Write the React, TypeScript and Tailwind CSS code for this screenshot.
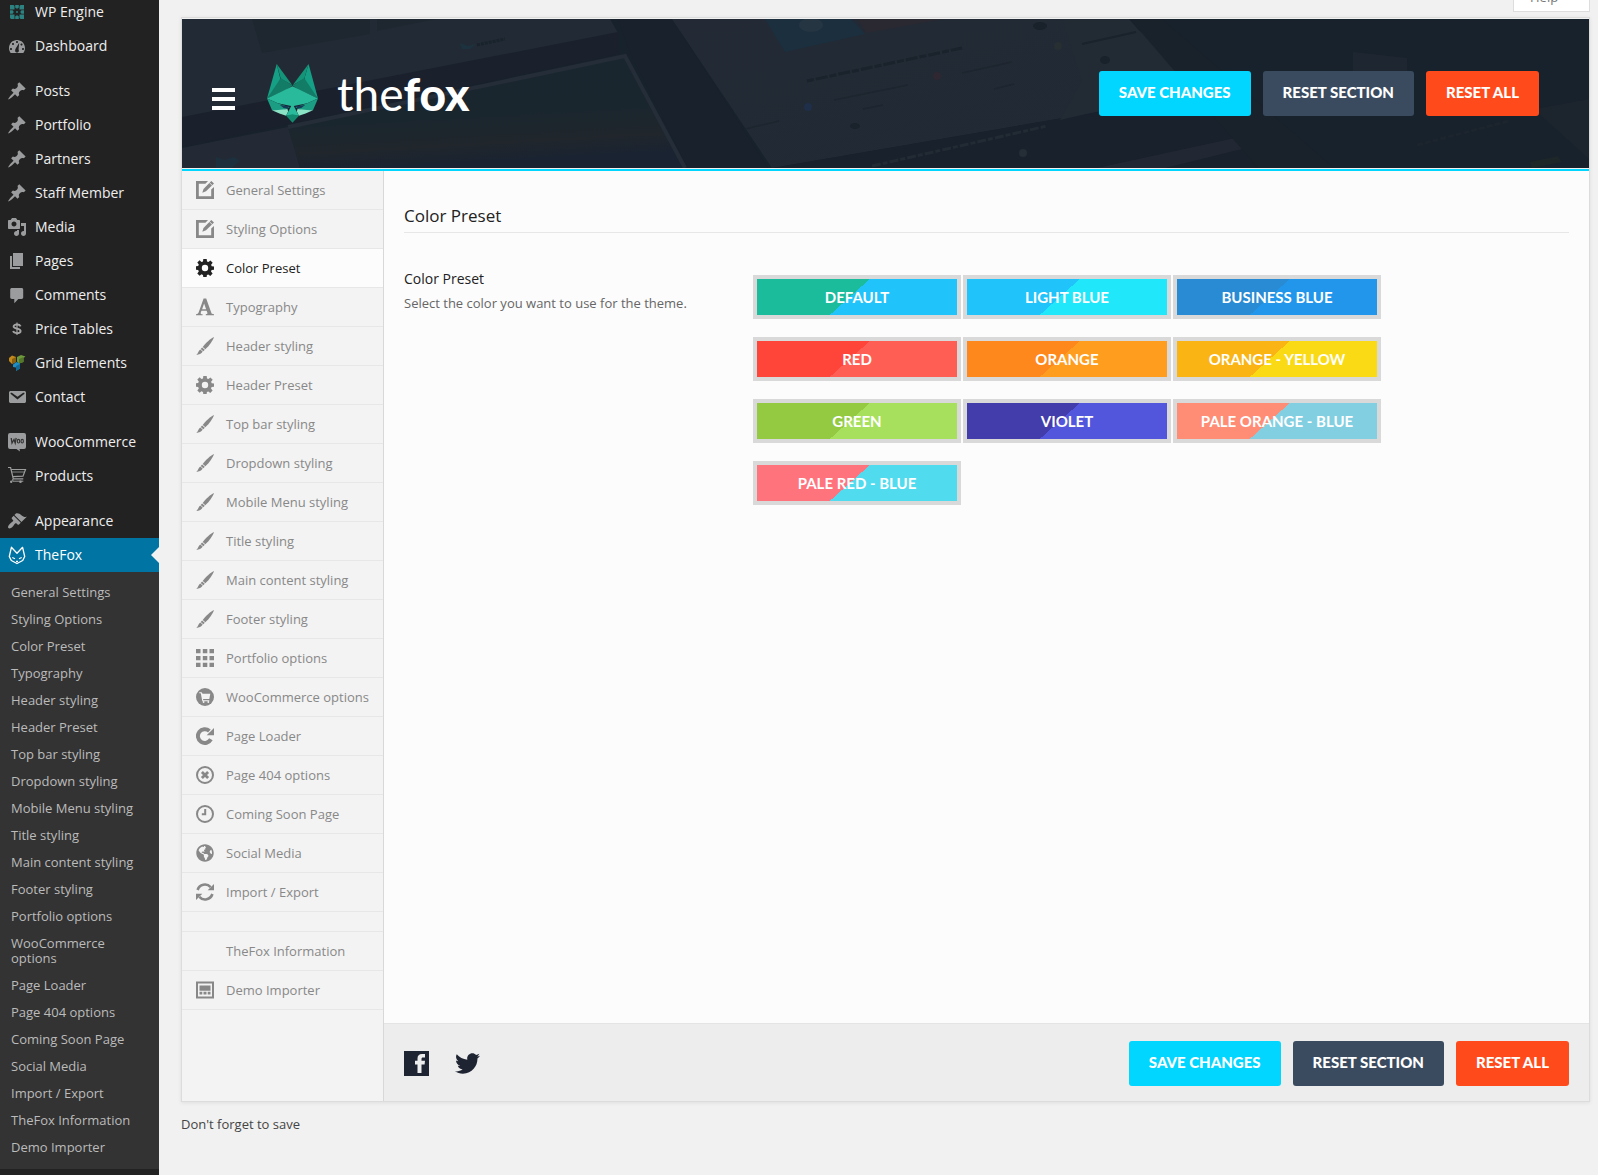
import React from "react";
import { FaGlobeAmericas, FaTwitter } from "react-icons/fa";

type Icon = () => React.ReactElement;

/* ---------- admin sidebar icons (20px grid) ---------- */

const dash = (d: string): Icon => () => (
  <svg viewBox="0 0 20 20" className="size-5 fill-[#9b9c9d]" aria-hidden="true">
    <path d={d} fillRule="evenodd" />
  </svg>
);

const Gauge = dash(
  "M3.76 17h12.48C17.34 15.63 18 13.9 18 12c0-4.41-3.58-8-8-8s-8 3.59-8 8c0 1.9.66 3.63 1.76 5zM9 6c0-.55.45-1 1-1s1 .45 1 1c0 .56-.45 1-1 1s-1-.44-1-1zm-4 2c0-.55.45-1 1-1s1 .45 1 1c0 .56-.45 1-1 1s-1-.44-1-1zM9 12l3.2-5.2L11.6 13c0 .8.3 1 .3 1.700c0 1-.8 1.800-1.900 1.800s-1.900-.8-1.900-1.800c0-1 .4-1.700.9-2.700zM3 13c0-.55.45-1 1-1s1 .45 1 1c0 .56-.45 1-1 1s-1-.44-1-1zM13.500 8.500c0-.55.45-1 1-1s1 .45 1 1c0 .56-.45 1-1 1s-1-.44-1-1zm1.500 4.500c0-.55.45-1 1-1s1 .45 1 1c0 .56-.45 1-1 1s-1-.44-1-1z",
);
const Pin = dash(
  "M10.44 3.02l1.82-1.82 6.36 6.35-1.83 1.82c-1.05-.68-2.48-.57-3.41.36l-.75.75c-.92.93-1.04 2.35-.35 3.41l-1.83 1.82-2.41-2.41-2.8 2.79c-.42.42-3.38 2.71-3.8 2.29s1.86-3.39 2.28-3.81l2.79-2.79L4.1 9.36l1.83-1.82c1.05.69 2.48.57 3.4-.36l.75-.75c.93-.92 1.05-2.35.36-3.41z",
);
const MediaIcon = dash(
  "M13 11V4c0-.55-.45-1-1-1h-1.67L9 1H5L3.67 3H2c-.55 0-1 .45-1 1v7c0 .55.45 1 1 1h10c.55 0 1-.45 1-1zM7 4.5c1.38 0 2.5 1.12 2.5 2.5S8.38 9.5 7 9.500 4.500 8.380 4.500 7 5.620 4.500 7 4.500zM14 6h5v10.500c0 1.380-1.120 2.500-2.500 2.500S14 17.880 14 16.500s1.120-2.500 2.500-2.500c.17 0 .34.02.5.05V9h-3V6zm-4 8.050V13h2v3.500c0 1.380-1.120 2.500-2.500 2.500S7 17.880 7 16.500 8.120 14 9.500 14c.17 0 .34.02.5.05z",
);
const PageIcon = dash("M6 15V2h10v13H6zm-1 1h8v2H3V5h2v11z");
const CommentIcon = dash(
  "M5 3h9.500c1.100 0 1.700.7 1.700 1.700v7.600c0 1-.6 1.700-1.700 1.700h-3.200l-4 4.300V14H5c-1.100 0-1.800-.7-1.800-1.700V4.700C3.200 3.700 3.900 3 5 3z",
);
const MailIcon = dash(
  "M3.87 4h13.250C18.370 4 19 4.590 19 5.790v8.420c0 1.190-.63 1.790-1.880 1.790H3.870c-1.250 0-1.880-.6-1.880-1.790V5.790c0-1.200.63-1.790 1.880-1.790zm6.620 8.600l6.740-5.530c.24-.2.43-.66.13-1.070-.29-.41-.82-.42-1.170-.17l-5.700 3.860L4.800 5.830c-.35-.25-.88-.24-1.170.17-.3.41-.11.87.13 1.070z",
);
const AppearanceIcon = dash(
  "M14.48 11.06L7.41 3.99l1.5-1.5c.5-.56 2.3-.47 3.51.32 1.21.8 1.43 1.28 2.91 2.1 1.18.64 2.45 1.26 4.45.85zm-.71.71L6.7 4.7 4.93 6.47c-.39.39-.39 1.02 0 1.41l1.06 1.06c.39.39.39 1.03 0 1.42-.6.6-1.43 1.11-2.21 1.69-.35.26-.7.53-1.01.84C1.43 14.23.4 16.08 1.4 17.07c.99 1 2.84-.03 4.18-1.36.31-.31.58-.66.85-1.02.57-.78 1.08-1.61 1.69-2.21.39-.39 1.02-.39 1.41 0l1.06 1.06c.39.39 1.02.39 1.41 0z",
);

const EngineIcon: Icon = () => (
  <svg viewBox="0 0 20 20" className="size-5 fill-[#2c8181]" aria-hidden="true">
    <path d="M3 3h3.500l1 1v3.500H3zM8.200 3h3.600v2.500l-1 1H9.200l-1-1zM12.500 4l1-1H17v4.500h-4.500zM3 8.200h2.500l1 1v1.600l-1 1H3zM17 8.200h-2.500l-1 1v1.600l1 1H17zM3 12.500h4.500V17H4l-1-1zM8.200 17v-2.500l1-1h1.600l1 1V17zM12.500 12.500H17V17h-3.500l-1-1z" />
    <circle cx="10" cy="10" r="1" />
  </svg>
);
const DollarIcon: Icon = () => (
  <svg viewBox="0 0 20 20" className="size-5 fill-none stroke-[#a3a3a3]" aria-hidden="true">
    <path d="M13.600 7.400C13 6 11.700 5.500 10 5.500 8 5.500 6.600 6.200 6.600 7.500c0 2.800 7 1.300 7 4.400 0 1.400-1.500 2.200-3.600 2.200-2 0-3.400-.7-3.900-2.100" strokeWidth="1.900" />
    <path d="M10 3.500v12.600" strokeWidth="1.200" />
  </svg>
);
const GridElementsIcon: Icon = () => (
  <svg viewBox="0 0 20 20" className="size-5" aria-hidden="true">
    <path d="M2 5l3-2.500L9 4v5l-4 2-3-3z" fill="#c28a1c" />
    <path d="M5 6l4-2v5l-4 2z" fill="#8a5f10" />
    <path d="M10 4l4-2 4.500 1.500-2 1.500v4L12 10.500l-2-2z" fill="#6f9a3c" />
    <path d="M12 6l4.500-2v5L12 10.500z" fill="#54782b" />
    <path d="M6 11.500L9.500 9l3.500 1.500v5l-4 2.500v-3.500L6 14z" fill="#1f8ec2" />
    <path d="M9 13l4-2v4.500L9 18z" fill="#136a96" />
  </svg>
);
const WooIcon: Icon = () => (
  <svg viewBox="0 0 20 20" className="size-5" aria-hidden="true">
    <path d="M3 1h14q2 0 2 2v12q0 2-2 2h-4.500l.5 2.500L9.500 17H3q-2 0-2-2V3q0-2 2-2z" fill="#9b9c9d" />
    <path d="M4.200 6l.8 5L7 7.500 8.200 11l1-5" fill="none" stroke="#333" strokeWidth="1.300" />
    <ellipse cx="11.500" cy="9.200" rx="1.200" ry="1.800" fill="none" stroke="#333" strokeWidth="1.100" />
    <ellipse cx="15.200" cy="9.200" rx="1.200" ry="1.800" fill="none" stroke="#333" strokeWidth="1.100" />
  </svg>
);
const ProductsIcon: Icon = () => (
  <svg viewBox="0 0 20 20" className="size-5 fill-none stroke-[#9b9c9d]" aria-hidden="true">
    <path d="M1 1.500h2.600l2.700 11.300h10M3.700 3.500h14.800l-2.500 6.600-10.300.6" strokeWidth="1.200" />
    <path d="M4.500 6h12.500" strokeWidth="0.800" />
    <path d="M5.800 13v2.200h10.500" strokeWidth="1" />
    <circle cx="4.200" cy="15.800" r="1.200" className="fill-[#9b9c9d] stroke-none" />
    <circle cx="13.500" cy="15.800" r="1.300" className="fill-[#9b9c9d] stroke-none" />
  </svg>
);
const FoxOutline: Icon = () => (
  <svg viewBox="0 0 20 20" className="size-5 fill-none stroke-white" aria-hidden="true">
    <path d="M4.400 2.300L2.300 11.500l2 4L10 18.500l5.700-3 2-4-2.100-9.200L10 8.300z" strokeWidth="1.300" strokeLinejoin="round" />
    <path d="M5.300 12.500l2.700 1.300M14.700 12.500L12 13.800M9 16.300h2" strokeWidth="1.200" />
  </svg>
);

/* ---------- option panel icons (18px grid) ---------- */

const glyph = (children: React.ReactNode): Icon => () => (
  <svg viewBox="0 0 18 18" className="size-[18px] fill-current" aria-hidden="true">
    {children}
  </svg>
);

const EditIcon = glyph(
  <>
    <path d="M0 0h12l-2.600 2.800H2.800v12.400h12.400V8.600L18 6v12H0z" />
    <path d="M15.300 0L18 2.600l-8 7.700-3.700 1.500 1.200-3.900z" />
    <path d="M13.300 1.600l3 2.900" className="stroke-[#f3f3f3]" strokeWidth="0.800" />
  </>,
);
const GearIcon = glyph(
  <path
    fillRule="evenodd"
    d="M7.300 0h3.400l.3 2.500 1.400.6 2-1.600 2.300 2.300-1.600 2 .6 1.500 2.300.3v3.200l-2.400.3-.6 1.500 1.600 2-2.300 2.300-2-1.500-1.400.6-.3 2.400H7.300L7 15.900l-1.500-.6-1.900 1.500-2.300-2.300 1.500-1.900-.6-1.500L0 10.700V7.300L2.200 7l.6-1.400-1.500-2 2.300-2.300 1.900 1.600L7 2.400zM9 5.800a3.200 3.200 0 1 0 0 6.400 3.200 3.200 0 0 0 0-6.400z"
  />,
);
const TypeIcon = glyph(
  <path
    fillRule="evenodd"
    d="M7.600.5h2.600l5.100 14.300c.3 1 .9 1.300 2.700 1.500v1H9.800v-1c1.500-.1 1.900-.5 1.500-1.700l-.7-1.900H5.500l-.7 1.800c-.4 1.200.1 1.700 1.800 1.800v1H0v-1c1.500-.2 2.200-.7 2.700-2zM8.100 5.500L6.100 11.200h4z"
  />,
);
const BrushIcon = glyph(
  <>
    <path d="M18 0c-1.200 3.600-4.800 8.900-8.600 12.200L6.700 9.900C9.600 6.200 14.300 1.600 18 0z" />
    <path d="M6.100 10.500l2.700 2.300-1.500 1.400-2.600-2.200z" />
    <path d="M4.200 12.500l2.500 2.100C5.400 16.800 3 17.800.3 18c1.900-1.400 1.900-3.900 3.900-5.500z" />
  </>,
);
const GridIcon = glyph(
  <path d="M0 0h4.500v4.200H0zM6.800 0h4.500v4.200H6.800zM13.500 0H18v4.200h-4.500zM0 7h4.500v4.200H0zM6.800 7h4.500v4.200H6.800zM13.500 7H18v4.200h-4.500zM0 13.800h4.500V18H0zM6.800 13.800h4.500V18H6.800zM13.500 13.800H18V18h-4.500z" />,
);
const CartIcon = glyph(
  <>
    <circle cx="9" cy="9" r="9" />
    <path d="M3.300 4.300h2.300l1 1.500h7.700l-1 5.200H7l.3 1.200h6v1H6.300L4.800 5.300H3.300z" className="fill-[#f3f3f3]" />
    <circle cx="7.600" cy="14" r="0.900" className="fill-[#f3f3f3]" />
    <circle cx="12.300" cy="14" r="0.900" className="fill-[#f3f3f3]" />
  </>,
);
const ReloadIcon = glyph(
  <>
    <path d="M14.900 12.300A6.900 6.900 0 1 1 13.400 3.900" fill="none" stroke="currentColor" strokeWidth="4" />
    <path d="M18 1v7.300h-7.300z" />
  </>,
);
const CircleCrossIcon = glyph(
  <>
    <circle cx="9" cy="9" r="8" fill="none" stroke="currentColor" strokeWidth="2" />
    <path d="M5.900 5.900l6.200 6.200M12.100 5.900l-6.200 6.200" stroke="currentColor" strokeWidth="2.800" />
  </>,
);
const ClockIcon = glyph(
  <>
    <circle cx="9" cy="9" r="8" fill="none" stroke="currentColor" strokeWidth="2" />
    <path d="M9.200 4v5.300H5.800" fill="none" stroke="currentColor" strokeWidth="2" />
  </>,
);
const SyncIcon = glyph(
  <>
    <path d="M1.600 7A7.600 7.600 0 0 1 14.600 4.200M16.400 11A7.600 7.600 0 0 1 3.400 13.800" fill="none" stroke="currentColor" strokeWidth="2.600" />
    <path d="M18 1v6.300h-6.300zM0 17v-6.300h6.300z" />
  </>,
);
const DemoIcon = glyph(
  <>
    <path fillRule="evenodd" d="M0 .5h18v17H0zM2 2.500v13h14v-13z" />
    <path d="M3.500 4.500h11v5.300h-11zM3.500 10.800h2.800v2.700H3.500zM7.500 10.800h3v2.700h-3zM11.700 10.800h2.800v2.700h-2.800z" />
  </>,
);
const GlobeIcon: Icon = () => <FaGlobeAmericas className="size-[18px]" aria-hidden="true" />;

/* ---------- data ---------- */

const adminGroups: { label: string; icon: Icon; active?: boolean }[][] = [
  [
    { label: "WP Engine", icon: EngineIcon },
    { label: "Dashboard", icon: Gauge },
  ],
  [
    { label: "Posts", icon: Pin },
    { label: "Portfolio", icon: Pin },
    { label: "Partners", icon: Pin },
    { label: "Staff Member", icon: Pin },
    { label: "Media", icon: MediaIcon },
    { label: "Pages", icon: PageIcon },
    { label: "Comments", icon: CommentIcon },
    { label: "Price Tables", icon: DollarIcon },
    { label: "Grid Elements", icon: GridElementsIcon },
    { label: "Contact", icon: MailIcon },
  ],
  [
    { label: "WooCommerce", icon: WooIcon },
    { label: "Products", icon: ProductsIcon },
  ],
  [
    { label: "Appearance", icon: AppearanceIcon },
    { label: "TheFox", icon: FoxOutline, active: true },
  ],
];

const sections: { label: string; icon: Icon }[] = [
  { label: "General Settings", icon: EditIcon },
  { label: "Styling Options", icon: EditIcon },
  { label: "Color Preset", icon: GearIcon },
  { label: "Typography", icon: TypeIcon },
  { label: "Header styling", icon: BrushIcon },
  { label: "Header Preset", icon: GearIcon },
  { label: "Top bar styling", icon: BrushIcon },
  { label: "Dropdown styling", icon: BrushIcon },
  { label: "Mobile Menu styling", icon: BrushIcon },
  { label: "Title styling", icon: BrushIcon },
  { label: "Main content styling", icon: BrushIcon },
  { label: "Footer styling", icon: BrushIcon },
  { label: "Portfolio options", icon: GridIcon },
  { label: "WooCommerce options", icon: CartIcon },
  { label: "Page Loader", icon: ReloadIcon },
  { label: "Page 404 options", icon: CircleCrossIcon },
  { label: "Coming Soon Page", icon: ClockIcon },
  { label: "Social Media", icon: GlobeIcon },
  { label: "Import / Export", icon: SyncIcon },
];

const extraSections: { label: string; icon?: Icon }[] = [
  { label: "TheFox Information" },
  { label: "Demo Importer", icon: DemoIcon },
];

const presets = [
  { label: "Default", bg: "bg-[linear-gradient(138deg,#1abc9c_47%,#20c3fa_47%)]" },
  { label: "Light Blue", bg: "bg-[linear-gradient(138deg,#20c3fa_47%,#20e8fa_47%)]" },
  { label: "Business Blue", bg: "bg-[linear-gradient(138deg,#288bd3_47%,#2196eb_47%)]" },
  { label: "Red", bg: "bg-[linear-gradient(138deg,#ff4539_47%,#ff5e55_47%)]" },
  { label: "Orange", bg: "bg-[linear-gradient(138deg,#ff881c_47%,#ff9d1e_47%)]" },
  { label: "Orange - Yellow", bg: "bg-[linear-gradient(138deg,#fab414_47%,#fada14_47%)]" },
  { label: "Green", bg: "bg-[linear-gradient(138deg,#93ca42_47%,#a7e05c_47%)]" },
  { label: "Violet", bg: "bg-[linear-gradient(138deg,#423dab_47%,#5256dd_47%)]" },
  { label: "Pale Orange - Blue", bg: "bg-[linear-gradient(138deg,#ff8c75_47%,#82cfe1_47%)]" },
  { label: "Pale Red - Blue", bg: "bg-[linear-gradient(138deg,#ff737d_47%,#50dcee_47%)]" },
];

/* ---------- parts ---------- */

function AdminSidebar() {
  return (
    <nav aria-label="Admin" className="w-[159px] shrink-0 overflow-hidden bg-[#222]">
      <div className="-mt-[5px]">
        {adminGroups.map((group, i) => (
          <ul key={i} className={i === 0 ? "" : "mt-[11px]"}>
            {group.map(({ label, icon: Glyph, active }) => (
              <li key={label}>
                <a
                  href="#"
                  className={
                    "relative flex h-[34px] items-center gap-2 pl-[7px] text-sm " +
                    (active ? "bg-[#0074a2] text-white" : "text-[#eee]")
                  }
                >
                  <Glyph />
                  {label}
                  {active && (
                    <span className="absolute top-[9px] right-0 border-8 border-l-0 border-transparent border-r-[#f1f1f1]" />
                  )}
                </a>
              </li>
            ))}
          </ul>
        ))}
        <ul className="bg-[#333] pt-[7px] pb-2">
          {[...sections, ...extraSections].map(({ label }) => (
            <li key={label}>
              <a href="#" className="block py-[6px] pr-3 pl-[11px] text-[13px] leading-[15px] text-[#bbb]">
                {label}
              </a>
            </li>
          ))}
        </ul>
      </div>
    </nav>
  );
}

function FoxLogo() {
  return (
    <svg viewBox="0 0 152 176" className="h-[59px] w-[51px]" aria-hidden="true">
      <path d="M29 0L0 103 36 66 39 42z" fill="#15a085" />
      <path d="M29 0l46 63L41 44z" fill="#14957a" />
      <path d="M41 42L76 64 58 76 0 103z" fill="#137c66" />
      <path d="M124 0l28 103-37-37-3-24z" fill="#15a085" />
      <path d="M124 0L77 63l34-19z" fill="#14957a" />
      <path d="M111 42L76 64l18 12 58 27z" fill="#137c66" />
      <path d="M76 66L0 103l32 14 44 9 44-9 32-14z" fill="#29b99b" />
      <path d="M0 103l15 35h32l21-8-36-13z" fill="#1b9d83" />
      <path d="M152 103l-15 35h-32l-21-8 36-13z" fill="#1b9d83" />
      <path d="M38 122l30 4-8 7-10-2z" fill="#153a58" />
      <path d="M114 122l-30 4 8 7 10-2z" fill="#153a58" />
      <path d="M15 138l18-1 28-3 2 8-6 12-20-6z" fill="#8be3c6" />
      <path d="M137 138l-18-1-28-3-2 8 6 12 20-6z" fill="#8be3c6" />
      <path d="M76 118L57 154h38z" fill="#29b99b" />
      <path d="M57 154l19-4 19 4-19 21z" fill="#118a6f" />
    </svg>
  );
}

function HeaderBackdrop() {
  return (
    <svg
      viewBox="0 0 1407 149"
      preserveAspectRatio="none"
      className="absolute inset-0 size-full"
      aria-hidden="true"
    >
      <defs>
        <linearGradient id="screen" x1="0" y1="0" x2="0.200" y2="1">
          <stop offset="0" stopColor="#19262f" />
          <stop offset="0.600" stopColor="#1a262e" />
          <stop offset="0.850" stopColor="#20262c" />
          <stop offset="1" stopColor="#1a2331" />
        </linearGradient>
        <linearGradient id="paper" x1="0" y1="0" x2="1" y2="1">
          <stop offset="0" stopColor="#232a35" />
          <stop offset="1" stopColor="#202a34" />
        </linearGradient>
      </defs>
      <rect width="1407" height="149" fill="#18222c" />
      <path d="M0 0h428l8 14L0 102z" fill="#222b35" />
      <path d="M70 0h118v15L80 34z" fill="#1e272f" />
      <path d="M195 0h60l-60 12z" fill="#1e272f" />
      <path d="M0 98L436 13v22L0 128z" fill="#1a212d" />
      <path d="M0 129l106-21 12 41H0z" fill="#232a35" />
      <path d="M34 138l8 3 10-3 6 4-8 7H34z" fill="#1d303d" />
      <path d="M278 24l8 3 8-2-6 5h-8z" fill="#1c323e" />
      <path d="M295 26l28-6" stroke="#19232c" strokeWidth="3" strokeDasharray="3 1" />
      <path d="M106 108L443 37l60 112H118z" fill="url(#screen)" />
      <path d="M106 108L443 37l60 112" fill="none" stroke="#242d38" strokeWidth="4" />
      <path d="M436 0h54l96 149h-80L448 34z" fill="#19212c" />
      <path d="M490 0h450l104 71L590 149z" fill="url(#paper)" />
      <path d="M583 0h86l14 15-80 18z" fill="#1b2f3e" />
      <path d="M676 0h86l-78 14z" fill="#2a2932" />
      <ellipse cx="629" cy="6" rx="12" ry="7" fill="#263542" />
      <path d="M625 62l155-33" stroke="#1a222b" strokeWidth="3" strokeDasharray="7 2 12 2" />
      <path d="M652 81l74-15M780 54l50-11M812 70l20-5M563 110l34-8M681 90l20-4M890 26l16-3" stroke="#1d252f" strokeWidth="1.500" />
      <circle cx="626" cy="88" r="4" fill="#1f2f49" />
      <circle cx="755" cy="57" r="4" fill="#2f2731" />
      <circle cx="876" cy="27" r="4" fill="#272f32" />
      <ellipse cx="673" cy="107" rx="5" ry="3" fill="#1a222b" />
      <ellipse cx="858" cy="7" rx="7" ry="4" fill="#19212a" />
      <path d="M590 149l454-78 30 78z" fill="#19212c" />
      <path d="M690 147l175-40" stroke="#222a34" strokeWidth="3" strokeDasharray="9 2 5 2" />
      <circle cx="841" cy="134" r="4" fill="#252d37" />
      <path d="M880 0h67l62 71-131 30 22-40z" fill="#222a34" />
      <path d="M900 25l54-12" stroke="#1a222b" strokeWidth="2" />
      <ellipse cx="923" cy="41" rx="5" ry="4" fill="#19212a" />
      <path d="M915 149l143-31 10 10-85 21z" fill="#222833" />
      <path d="M948 0h32l172 149h-76z" fill="#19212a" />
      <path d="M1171 33l54 6v21l-54-4z" fill="#1e2731" />
      <path d="M1235 126l92-24" stroke="#1c252e" strokeWidth="3" strokeDasharray="6 2" />
      <path d="M1352 90l55-10v60z" fill="#1c242d" />
      <path d="M1348 143l28-6 4 6-30 6z" fill="#1d2628" />
    </svg>
  );
}

const actionBase =
  "h-[45px] rounded-[3px] px-5 pb-[2px] font-['Lato',sans-serif] text-[15px] font-black text-white uppercase whitespace-nowrap";

function Actions() {
  return (
    <div className="flex gap-3">
      <button type="submit" className={actionBase + " bg-[#00d6ff]"}>Save Changes</button>
      <button type="button" className={actionBase + " bg-[#3b4b5f]"}>Reset Section</button>
      <button type="button" className={actionBase + " bg-[#ff4a1c]"}>Reset All</button>
    </div>
  );
}

function SectionLink({ label, icon: Glyph, active }: { label: string; icon?: Icon; active?: boolean }) {
  return (
    <li>
      <a
        href="#"
        aria-current={active ? "page" : undefined}
        className={
          "flex h-[39px] items-center gap-3 border-b border-[#e7e7e7] pl-[14px] text-[13px] whitespace-nowrap " +
          (active ? "bg-[#fcfcfc] text-[#222]" : "text-[#888]")
        }
      >
        <span className="size-[18px]">{Glyph && <Glyph />}</span>
        <span className="pt-[2px]">{label}</span>
      </a>
    </li>
  );
}

export default function App() {
  return (
    <div className="flex min-h-screen bg-[#f1f1f1] font-['Open_Sans',sans-serif] text-[#444]">
      <AdminSidebar />

      <main className="min-w-0 flex-1 pr-2 pl-[22px]">
        <div className="flex h-[17px] justify-end">
          <button
            type="button"
            className="flex h-3 w-[77px] items-end overflow-hidden border border-t-0 border-[#ddd] bg-white px-4 pb-[5px] text-[13px] leading-[18px] text-[#777]"
          >
            Help
          </button>
        </div>

        <form
          onSubmit={(e) => e.preventDefault()}
          className="border border-[#dcdcdc] shadow-[0_1px_4px_rgba(0,0,0,0.08)]"
        >
          <header className="border-b-2 border-[#00d6ff]">
            <div className="relative flex h-[151px] items-center justify-between border-y border-[#f1f1f1] bg-[#18222c] pr-[50px] pl-[30px]">
              <HeaderBackdrop />
              <div className="relative flex items-center">
                <button type="button" aria-label="Toggle menu" className="mt-[10px] flex w-[23px] flex-col gap-[5px]">
                  <span className="h-1 bg-white" />
                  <span className="h-1 bg-white" />
                  <span className="h-1 bg-white" />
                </button>
                <a href="#" className="ml-8 flex items-center gap-[19px] text-white">
                  <FoxLogo />
                  <span className="font-['Lato',sans-serif] text-[46px] leading-none">
                    the<span className="font-black">fox</span>
                  </span>
                </a>
              </div>
              <div className="relative">
                <Actions />
              </div>
            </div>
          </header>

          <div className="flex">
            <nav aria-label="Options" className="w-[202px] shrink-0 border-r border-[#d8d8d8] bg-[#f3f3f3] pb-[91px]">
              <ul>
                {sections.map((s) => (
                  <SectionLink key={s.label} {...s} active={s.label === "Color Preset"} />
                ))}
                <li role="separator" className="h-5 border-b border-[#e7e7e7]" />
                {extraSections.map((s) => (
                  <SectionLink key={s.label} {...s} />
                ))}
              </ul>
            </nav>

            <div className="flex min-w-0 flex-1 flex-col">
              <section className="flex-1 bg-[#fcfcfc] px-5 pt-[33px]">
                <h2 className="border-b border-[#e7e7e7] pb-1 text-[17px] leading-6 font-medium text-[#222]">
                  Color Preset
                </h2>
                <div className="mt-[34px] flex">
                  <div className="w-[349px] shrink-0">
                    <h3 className="text-sm leading-6 font-medium text-[#222]">Color Preset</h3>
                    <p className="text-[13px] leading-6 text-[#666]">Select the color you want to use for the theme.</p>
                  </div>
                  <div className="mt-2 flex w-[630px] flex-wrap gap-x-[2px] gap-y-[18px]">
                    {presets.map(({ label, bg }) => (
                      <button
                        key={label}
                        type="button"
                        className="h-11 w-[208px] border-4 border-[#d9d9d9] font-['Lato',sans-serif] text-[15px] font-bold text-white uppercase"
                      >
                        <span className={"flex h-9 items-center justify-center " + bg}>{label}</span>
                      </button>
                    ))}
                  </div>
                </div>
              </section>

              <footer className="flex h-[78px] items-center justify-between border-t border-[#e4e4e4] bg-[#ededed] px-5 pt-[2px]">
                <div className="flex items-center gap-[26px] text-[#1f2433]">
                  <a href="#" aria-label="Facebook">
                    <svg viewBox="0 0 25 25" className="size-[25px]" aria-hidden="true">
                      <path d="M0 0h25v25H0z" fill="currentColor" />
                      <path d="M13.500 22v-8.600H11v-3.600h2.500V7.600c0-3 1.600-4.600 4.500-4.600h3v3.500h-2c-1.200 0-1.500.6-1.500 1.700v1.600H21l-.4 3.600h-3.100V22z" fill="#ededed" />
                    </svg>
                  </a>
                  <a href="#" aria-label="Twitter">
                    <FaTwitter className="size-[25px]" aria-hidden="true" />
                  </a>
                </div>
                <Actions />
              </footer>
            </div>
          </div>
        </form>

        <p className="mt-3 text-[13px] leading-5">Don't forget to save</p>
      </main>
    </div>
  );
}
